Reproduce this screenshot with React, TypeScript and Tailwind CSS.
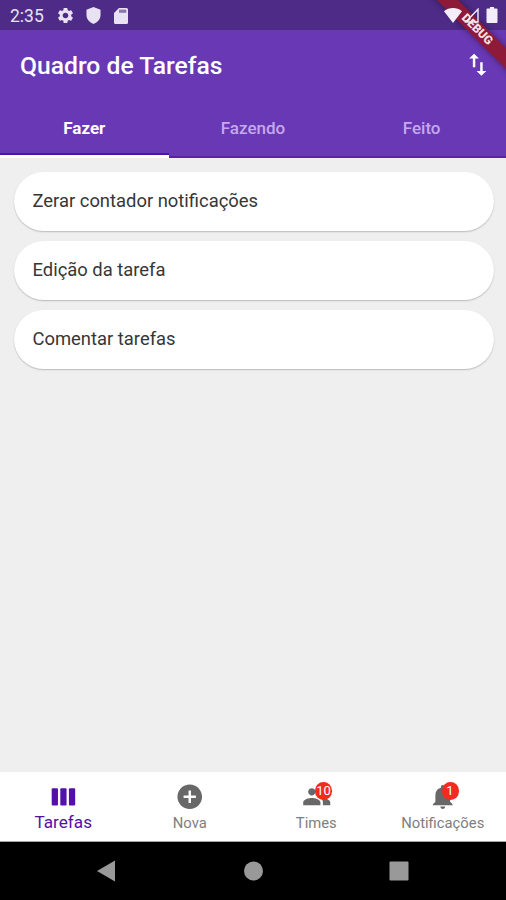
import { useState } from 'react'
import { MdAddCircle, MdNotifications, MdPeople, MdSettings, MdSwapVert } from 'react-icons/md'

const tabs = ['Fazer', 'Fazendo', 'Feito']

const tasks = ['Zerar contador notificações', 'Edição da tarefa', 'Comentar tarefas']

function ColumnsIcon() {
  return (
    <svg viewBox="0 0 24 24" className="size-[29.5px]" fill="currentColor">
      <rect x="2.2" y="5.1" width="5.1" height="14" rx="0.8" />
      <rect x="9.2" y="5.1" width="5.1" height="14" rx="0.8" />
      <rect x="16.2" y="5.1" width="5.1" height="14" rx="0.8" />
    </svg>
  )
}

const navItems = [
  { id: 'tarefas', label: 'Tarefas', icon: <ColumnsIcon />, badge: '' },
  { id: 'nova', label: 'Nova', icon: <MdAddCircle size={29.5} />, badge: '' },
  { id: 'times', label: 'Times', icon: <MdPeople size={29.5} />, badge: '10' },
  { id: 'notificacoes', label: 'Notificações', icon: <MdNotifications size={29.5} />, badge: '1' }
]

function StatusBar() {
  return (
    <div className="h-[30px] shrink-0 bg-[#4d2b87] flex items-center justify-between pl-[10px] pr-[8px] text-[#e9e2f3]">
      <div className="flex items-center">
        <span className="w-[46px] text-[17.5px] leading-[30px] pt-[2px]">2:35</span>
        <MdSettings size={19} className="mt-px" />
        <svg viewBox="0 0 16 18" className="w-[15px] h-[17px] ml-[11px] mt-px" fill="currentColor">
          <path d="M8 0 15.5 2.8V8.5C15.5 13 12.3 16.6 8 18 3.7 16.6.5 13 .5 8.5V2.8z" />
        </svg>
        <svg viewBox="0 0 14 16" className="w-[14px] h-[16px] ml-[13px] mt-px" fill="currentColor">
          <path d="M5 0h7.5A1.5 1.5 0 0 1 14 1.5v13a1.5 1.5 0 0 1-1.5 1.5h-11A1.5 1.5 0 0 1 0 14.5V5z" />
          <path d="M5 1.6h7.3v3.2H5z" fill="#4d2b87" fillOpacity="0.6" />
        </svg>
      </div>
      <div className="relative z-20 flex items-center text-[#f2edf8]">
        <svg viewBox="0 0 18 15" className="w-[18px] h-[15px]" fill="currentColor">
          <path d="M0 3.2C5-1 13-1 18 3.2L9 15z" />
        </svg>
        <svg viewBox="0 0 15 15" className="w-[15px] h-[15px] ml-[2px]" fill="none" stroke="currentColor" strokeWidth="1.4">
          <path d="M14 1.2V14H1.8z" />
        </svg>
        <svg viewBox="0 0 12 16" className="w-[12px] h-[16px] ml-[7px]" fill="currentColor">
          <path d="M4 0h4v1.6h2.5A1 1 0 0 1 11.5 2.6V15a1 1 0 0 1-1 1h-9a1 1 0 0 1-1-1V2.6a1 1 0 0 1 1-1H4z" />
        </svg>
      </div>
    </div>
  )
}

export default function App() {
  const [activeTab, setActiveTab] = useState('Fazer')
  const [activeNav, setActiveNav] = useState('tarefas')

  return (
    <div className="relative w-[506px] h-[900px] overflow-hidden flex flex-col bg-[#efefef] font-[Roboto,sans-serif]">
      <StatusBar />

      {/* Debug banner */}
      <div className="absolute z-10 top-[22px] left-[407px] w-[140px] h-[15px] rotate-45 bg-[#8d1a38] shadow-[0_0_6px_rgba(0,0,0,0.4)] text-[#f3dfe6] text-[12px] leading-[15px] font-black text-center">
        DEBUG
      </div>

      {/* App bar */}
      <header className="shrink-0 bg-[#6938b5]">
        <div className="h-[69px] flex items-center justify-between pl-[20px] pr-[14px] text-white">
          <h1 className="text-[24.7px] font-medium leading-[30px] pt-[2px]">Quadro de Tarefas</h1>
          <MdSwapVert size={29.5} />
        </div>
        <div className="h-[59px] grid grid-cols-3">
          {tabs.map((tab) => (
            <button
              key={tab}
              onClick={() => setActiveTab(tab)}
              className={`h-[59px] flex flex-col text-[17px] ${
                activeTab === tab ? 'font-bold text-white' : 'font-medium text-[#c4a9ee]'
              }`}
            >
              <span className="flex-1 w-full flex items-center justify-center pt-[5px]">{tab}</span>
              <span
                className={`w-full ${
                  activeTab === tab ? 'h-[5px] border-t-2 border-[#5113a5] bg-white' : 'h-[2px] mt-[3px] bg-[#5722a8]'
                }`}
              />
            </button>
          ))}
        </div>
      </header>

      {/* Task list */}
      <main className="flex-1 pl-[14px] pr-[12.5px] pt-[13.5px] flex flex-col gap-[10px]">
        {tasks.map((task) => (
          <div
            key={task}
            className="h-[59px] rounded-full bg-white pl-[18.5px] pb-px flex items-center text-[18.4px] text-[#363636] shadow-[0_1px_1.5px_rgba(0,0,0,0.22)]"
          >
            {task}
          </div>
        ))}
      </main>

      {/* Bottom navigation */}
      <nav className="h-[70px] shrink-0 bg-white border-b border-[#a5a5a5] grid grid-cols-4">
        {navItems.map((item) => (
          <button
            key={item.id}
            onClick={() => setActiveNav(item.id)}
            className={`flex flex-col items-center pt-[10px] ${
              activeNav === item.id ? 'text-[#5410ab] text-[17.2px]' : 'text-[#686868] text-[14.8px]'
            }`}
          >
            <span className="relative">
              {item.icon}
              {item.badge && (
                <span className="absolute top-0 -right-px min-w-[17px] h-[18px] rounded-full bg-[#f32a20] text-white text-[13px] leading-[17px] text-center">
                  {item.badge}
                </span>
              )}
            </span>
            <span className={activeNav === item.id ? 'leading-[20px]' : 'leading-[23px] text-[#7e7e7e]'}>
              {item.label}
            </span>
          </button>
        ))}
      </nav>

      {/* System navigation */}
      <div className="h-[58px] shrink-0 bg-black text-[#999999]">
        <svg viewBox="0 0 506 58" className="w-full h-full" fill="currentColor">
          <path d="M97 29 115 18.5V39.5z" />
          <circle cx="253.5" cy="29" r="9.5" />
          <rect x="389.5" y="19.5" width="19" height="19" rx="1" />
        </svg>
      </div>
    </div>
  )
}
